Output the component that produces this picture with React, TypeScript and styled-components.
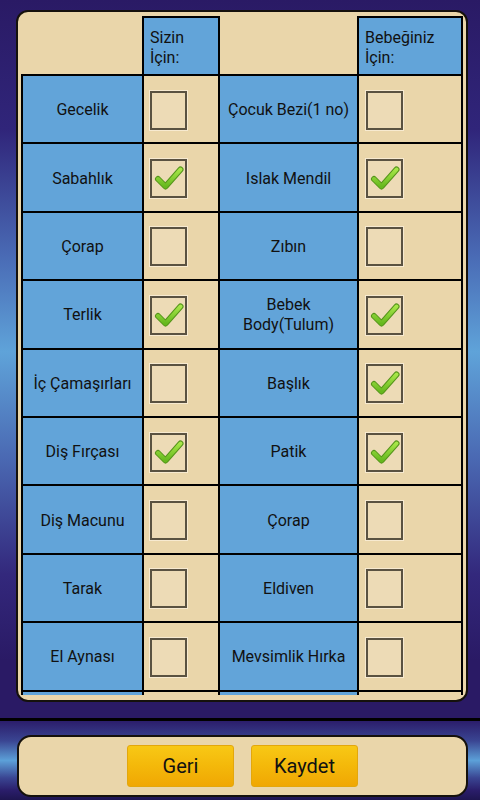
import React from "react";
import styled, { createGlobalStyle } from "styled-components";

const GlobalStyle = createGlobalStyle`
  html, body {
    margin: 0;
    padding: 0;
    background: #2a1a66;
  }
  body {
    font-family: Roboto, "Liberation Sans", sans-serif;
  }
`;

const BLUE = "#62a4d9";
const BEIGE = "#ead6aa";

const Screen = styled.div`
  width: 480px;
  height: 800px;
  display: flex;
  flex-direction: column;
  overflow: hidden;
`;

const Main = styled.div`
  height: 718px;
  box-sizing: border-box;
  padding: 10px 12px 16px 16px;
  background: linear-gradient(
    to bottom,
    #2a1a65 0%,
    #30257a 18%,
    #4a6cb6 36%,
    #5fa3d9 49%,
    #4a68b2 64%,
    #33287c 80%,
    #2a1a65 92%,
    #2a1a65 100%
  );
`;

const Panel = styled.div`
  height: 100%;
  box-sizing: border-box;
  border: 2px solid #15110c;
  border-radius: 12px;
  background: ${BEIGE};
  padding: 4px 3px 5px 3px;
  display: flex;
  flex-direction: column;
`;

const Scroll = styled.div`
  flex: 1;
  overflow: hidden;
`;

const HeaderRow = styled.div`
  display: grid;
  grid-template-columns: 121px 78px 137px 106px;
  width: 442px;
`;

const HeaderBox = styled.div`
  height: 58px;
  box-sizing: border-box;
  border: 2px solid #000;
  border-bottom: none;
  background: ${BLUE};
  padding: 10px 0 0 6px;
  font-size: 16px;
  line-height: 20px;
  color: #111;
`;

const Table = styled.div`
  display: grid;
  width: 442px;
  box-sizing: border-box;
  grid-template-columns: 119px 74px 137px 102px;
  grid-auto-rows: 66.4px;
  gap: 2px;
  padding: 2px;
  background: #000;
`;

const LabelCell = styled.div`
  background: ${BLUE};
  display: flex;
  align-items: center;
  justify-content: center;
  text-align: center;
  padding: 2px 4px 0;
  font-size: 16px;
  line-height: 20px;
  color: #111;
`;

const CheckCell = styled.div<{ $inset: number }>`
  background: ${BEIGE};
  display: flex;
  align-items: center;
  padding-left: ${(p) => p.$inset}px;
  padding-top: 2px;
`;

const Box = styled.div`
  width: 37px;
  height: 39px;
  box-sizing: border-box;
  border: 2px solid #5a5241;
  box-shadow: 0 0 0 1px #f7ead0;
  background: #eddbb6;
  position: relative;
`;

const Mark = styled.svg`
  position: absolute;
  left: 0;
  top: 0;
`;

const Divider = styled.div`
  height: 3px;
  background: #000;
`;

const Footer = styled.div`
  flex: 1;
  box-sizing: border-box;
  padding: 14px 12px 3px 17px;
  background: linear-gradient(
    to bottom,
    #2b1d6b 0%,
    #3a4592 25%,
    #5ca0d8 50%,
    #3a4592 72%,
    #2a1d6a 88%,
    #1e1550 100%
  );
`;

const FooterPanel = styled.div`
  height: 100%;
  box-sizing: border-box;
  border: 2px solid #15110c;
  border-radius: 14px;
  background: ${BEIGE};
  display: flex;
  align-items: center;
  justify-content: center;
  gap: 17px;
`;

const Button = styled.button`
  width: 107px;
  height: 42px;
  border: 1px solid #e3a70c;
  border-radius: 3px;
  background: linear-gradient(to bottom, #f8c815 0%, #f4b80a 50%, #f0a703 100%);
  font-family: Roboto, "Liberation Sans", sans-serif;
  font-size: 20px;
  color: #111;
  cursor: pointer;
  padding: 0;
`;

type Item = { name: string; checked: boolean };

// last row sits under the panel edge, only its top shows
const rows: [Item, Item][] = [
  [{ name: "Gecelik", checked: false }, { name: "Çocuk Bezi(1 no)", checked: false }],
  [{ name: "Sabahlık", checked: true }, { name: "Islak Mendil", checked: true }],
  [{ name: "Çorap", checked: false }, { name: "Zıbın", checked: false }],
  [{ name: "Terlik", checked: true }, { name: "Bebek Body(Tulum)", checked: true }],
  [{ name: "İç Çamaşırları", checked: false }, { name: "Başlık", checked: true }],
  [{ name: "Diş Fırçası", checked: true }, { name: "Patik", checked: true }],
  [{ name: "Diş Macunu", checked: false }, { name: "Çorap", checked: false }],
  [{ name: "Tarak", checked: false }, { name: "Eldiven", checked: false }],
  [{ name: "El Aynası", checked: false }, { name: "Mevsimlik Hırka", checked: false }],
  [{ name: "", checked: false }, { name: "", checked: false }],
];

const CheckBox = ({ checked }: { checked: boolean }) => (
  <Box>
    {checked && (
      <Mark width="33" height="35" viewBox="0 0 33 35">
        <defs>
          <linearGradient id="chk" x1="0" y1="0" x2="0" y2="1">
            <stop offset="0" stopColor="#a6e648" />
            <stop offset="1" stopColor="#66b81e" />
          </linearGradient>
        </defs>
        <path
          d="M6 18 L13.5 25.5 L28.5 8.5"
          fill="none"
          stroke="#55941a"
          strokeWidth="6"
          strokeLinecap="round"
          strokeLinejoin="round"
        />
        <path
          d="M6 18 L13.5 25.5 L28.5 8.5"
          fill="none"
          stroke="url(#chk)"
          strokeWidth="4"
          strokeLinecap="round"
          strokeLinejoin="round"
        />
      </Mark>
    )}
  </Box>
);

export default function App() {
  return (
    <Screen>
      <GlobalStyle />
      <Main>
        <Panel>
          <Scroll>
            <HeaderRow>
              <div />
              <HeaderBox>
                Sizin
                <br />
                İçin:
              </HeaderBox>
              <div />
              <HeaderBox>
                Bebeğiniz
                <br />
                İçin:
              </HeaderBox>
            </HeaderRow>
            <Table>
              {rows.map(([mine, baby], i) => (
                <React.Fragment key={i}>
                  <LabelCell>{mine.name}</LabelCell>
                  <CheckCell $inset={6}>
                    <CheckBox checked={mine.checked} />
                  </CheckCell>
                  <LabelCell>{baby.name}</LabelCell>
                  <CheckCell $inset={7}>
                    <CheckBox checked={baby.checked} />
                  </CheckCell>
                </React.Fragment>
              ))}
            </Table>
          </Scroll>
        </Panel>
      </Main>
      <Divider />
      <Footer>
        <FooterPanel>
          <Button>Geri</Button>
          <Button>Kaydet</Button>
        </FooterPanel>
      </Footer>
    </Screen>
  );
}
